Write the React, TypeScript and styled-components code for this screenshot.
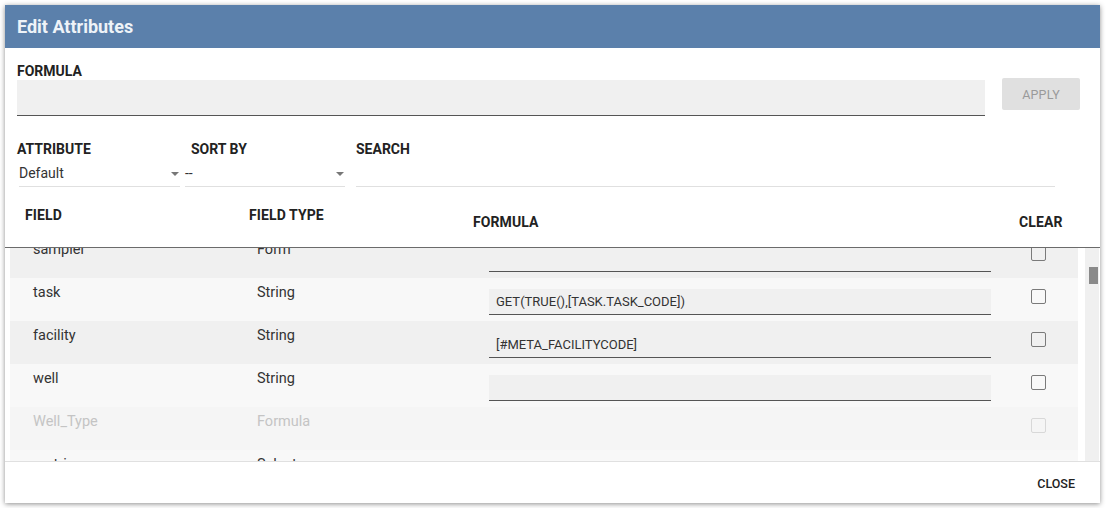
import React from "react"
import styled, { createGlobalStyle } from "styled-components"

const GlobalStyle = createGlobalStyle`
  html, body {
    margin: 0;
    padding: 0;
    background: #fff;
    font-family: Roboto, "Liberation Sans", Arial, sans-serif;
  }
`

const Dialog = styled.div`
  margin: 5px;
  width: 1095px;
  height: 498px;
  display: flex;
  flex-direction: column;
  background: #fff;
  box-shadow: 0 1px 5px rgba(0, 0, 0, 0.45);
  overflow: hidden;
`

const Header = styled.div`
  height: 43px;
  flex: none;
  display: flex;
  align-items: center;
  padding: 0 12px;
  background: #5b80ab;
`

const Title = styled.h1`
  margin: 0;
  font-size: 18px;
  font-weight: 700;
  color: #eef3f8;
`

const Controls = styled.div`
  flex: none;
  padding: 15px 20px 0 12px;
`

const Label = styled.div<{ indent?: number }>`
  font-size: 14px;
  font-weight: 700;
  line-height: 16px;
  color: #222;
  padding-left: ${({ indent }) => indent ?? 0}px;
`

const FormulaRow = styled.div`
  display: flex;
  align-items: flex-start;
  gap: 17px;
  margin-top: 1px;
`

const FormulaInput = styled.div`
  flex: 1;
  height: 35px;
  background: #f0f0f0;
  border-bottom: 1px solid #555;
`

const ApplyButton = styled.div`
  width: 78px;
  height: 32px;
  margin-top: -2px;
  display: flex;
  align-items: center;
  justify-content: center;
  background: #e0e0e0;
  border-radius: 2px;
  color: #9a9a9a;
  font-size: 12.5px;
  letter-spacing: 0.2px;
`

const FilterRow = styled.div`
  display: grid;
  grid-template-columns: 163px 160px 705px;
  column-gap: 5px;
  margin-top: 25px;

  & > :last-child {
    margin-left: 6px;
  }
`

const Select = styled.div<{ inset?: number }>`
  position: relative;
  margin-top: 4px;
  margin-left: ${({ inset }) => inset ?? 0}px;
  height: 25px;
  line-height: 25px;
  font-size: 14px;
  color: #333;
  border-bottom: 1px solid #e0e0e0;
`

const Arrow = styled.span`
  position: absolute;
  right: 1px;
  top: 11px;
  width: 0;
  height: 0;
  border-left: 4px solid transparent;
  border-right: 4px solid transparent;
  border-top: 4px solid #777;
`

const TableHead = styled.div`
  flex: none;
  height: 60px;
  display: grid;
  grid-template-columns: 224px 224px 546px auto;
  padding-left: 20px;
  border-bottom: 1px solid #6b6b6b;
`

const HeadCell = styled.div<{ low?: boolean }>`
  padding-top: ${({ low }) => (low ? 27 : 20)}px;
  font-size: 14px;
  font-weight: 700;
  line-height: 16px;
  color: #222;
  letter-spacing: 0.1px;
`

const TableBody = styled.div`
  flex: 1;
  min-height: 0;
  display: flex;
  gap: 7px;
  padding-left: 5px;
`

const Rows = styled.div`
  width: 1068px;
  overflow: hidden;
`

const RowList = styled.div`
  margin-top: -13px;
`

const Row = styled.div<{ shade: string }>`
  height: 43px;
  display: grid;
  grid-template-columns: 224px 224px 550px auto;
  padding-left: 23px;
  background: ${({ shade }) => shade};
`

const Cell = styled.div<{ muted?: boolean }>`
  padding-top: 6px;
  font-size: 14.5px;
  line-height: 18px;
  color: ${({ muted }) => (muted ? "#c4c4c4" : "#333")};
`

const RowInput = styled.div`
  margin: 11px 0 0 8px;
  width: 495px;
  height: 25px;
  padding-left: 7px;
  line-height: 25px;
  font-size: 13px;
  color: #333;
  background: #f0f0f0;
  border-bottom: 1px solid #555;
`

const Checkbox = styled.div<{ disabled?: boolean }>`
  margin-top: 11px;
  width: 13px;
  height: 13px;
  border: 1.5px solid ${({ disabled }) => (disabled ? "#d8d8d8" : "#7a7a7a")};
  border-radius: 2px;
`

const ScrollTrack = styled.div`
  width: 14px;
  background: #f0f0f0;
`

const ScrollThumb = styled.div`
  margin: 19px 0 0 4px;
  width: 9px;
  height: 17px;
  background: #8a8a8a;
`

const Footer = styled.div`
  flex: none;
  height: 42px;
  display: flex;
  align-items: center;
  justify-content: flex-end;
  padding: 2px 25px 0 0;
  box-sizing: border-box;
  border-top: 1px solid #e0e0e0;
`

const CloseButton = styled.div`
  font-size: 12.5px;
  font-weight: 500;
  color: #222;
`

type Attr = {
  field: string
  type: string
  formula?: string
  disabled?: boolean
}

const attrs: Attr[] = [
  { field: "sampler", type: "Form", formula: "" },
  { field: "task", type: "String", formula: "GET(TRUE(),[TASK.TASK_CODE])" },
  { field: "facility", type: "String", formula: "[#META_FACILITYCODE]" },
  { field: "well", type: "String", formula: "" },
  { field: "Well_Type", type: "Formula", disabled: true },
  { field: "matrix", type: "Select", formula: "" },
]

const shadeFor = (i: number, disabled?: boolean) => {
  if (disabled) return "#f5f5f5"
  return i % 2 === 0 ? "#f0f0f0" : "#f8f8f8"
}

export default function App() {
  return (
    <>
      <GlobalStyle />
      <Dialog>
        <Header>
          <Title>Edit Attributes</Title>
        </Header>
        <Controls>
          <Label>FORMULA</Label>
          <FormulaRow>
            <FormulaInput />
            <ApplyButton>APPLY</ApplyButton>
          </FormulaRow>
          <FilterRow>
            <div>
              <Label>ATTRIBUTE</Label>
              <Select inset={2}>
                Default
                <Arrow />
              </Select>
            </div>
            <div>
              <Label indent={6}>SORT BY</Label>
              <Select>
                --
                <Arrow />
              </Select>
            </div>
            <div>
              <Label>SEARCH</Label>
              <Select />
            </div>
          </FilterRow>
        </Controls>
        <TableHead>
          <HeadCell>FIELD</HeadCell>
          <HeadCell>FIELD TYPE</HeadCell>
          <HeadCell low>FORMULA</HeadCell>
          <HeadCell low>CLEAR</HeadCell>
        </TableHead>
        <TableBody>
          <Rows>
            <RowList>
              {attrs.map((a, i) => (
                <Row key={a.field} shade={shadeFor(i, a.disabled)}>
                  <Cell muted={a.disabled}>{a.field}</Cell>
                  <Cell muted={a.disabled}>{a.type}</Cell>
                  <div>
                    {!a.disabled && <RowInput>{a.formula}</RowInput>}
                  </div>
                  <Checkbox disabled={a.disabled} />
                </Row>
              ))}
            </RowList>
          </Rows>
          <ScrollTrack>
            <ScrollThumb />
          </ScrollTrack>
        </TableBody>
        <Footer>
          <CloseButton>CLOSE</CloseButton>
        </Footer>
      </Dialog>
    </>
  )
}
